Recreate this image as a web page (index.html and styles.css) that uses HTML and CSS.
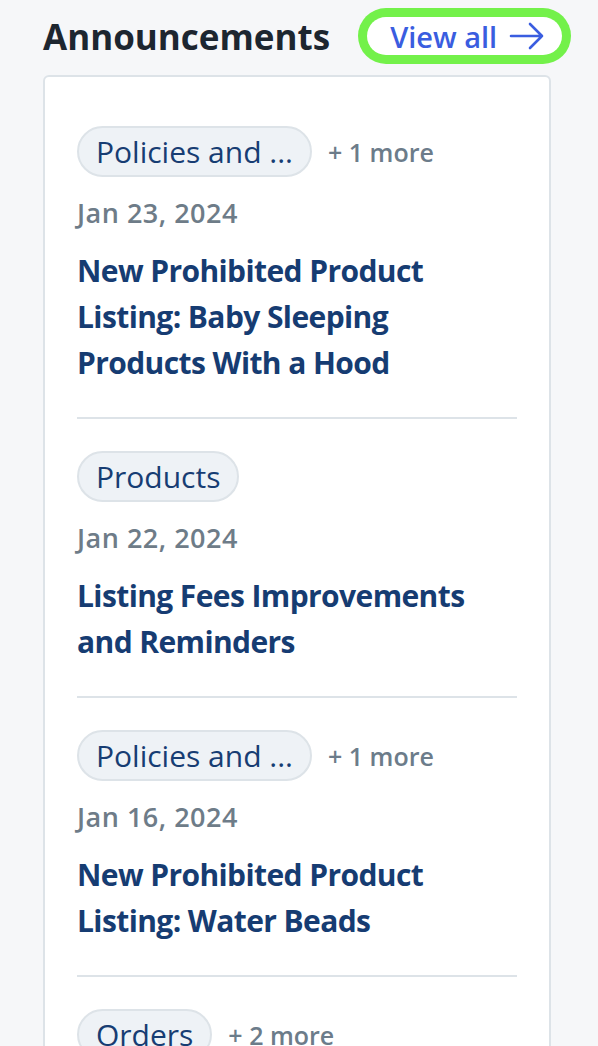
FILE: index.html
```html
<!DOCTYPE html>
<html>
<head>
<meta charset="utf-8">
<link rel="stylesheet" href="styles.css">
</head>
<body>
<div class="panel">
  <div class="header">
    <h2 class="title">Announcements</h2>
    <a class="view-all" href="#">View all
      <svg class="arrow" width="36" height="28" viewBox="0 0 36 28" fill="none" stroke="currentColor" stroke-width="2.6" stroke-linecap="round" stroke-linejoin="round"><path d="M2 14H33M21 2L33 14L21 26"/></svg>
    </a>
  </div>
  <div class="card">
    <div class="item">
      <div class="tags"><span class="tag">Policies and ...</span><span class="more">+ 1 more</span></div>
      <div class="date">Jan 23, 2024</div>
      <a class="headline" href="#">New Prohibited Product Listing: Baby Sleeping Products With a Hood</a>
    </div>
    <div class="item">
      <div class="tags"><span class="tag">Products</span></div>
      <div class="date">Jan 22, 2024</div>
      <a class="headline" href="#">Listing Fees Improvements and Reminders</a>
    </div>
    <div class="item">
      <div class="tags"><span class="tag">Policies and ...</span><span class="more">+ 1 more</span></div>
      <div class="date">Jan 16, 2024</div>
      <a class="headline" href="#">New Prohibited Product Listing: Water Beads</a>
    </div>
    <div class="item last">
      <div class="tags"><span class="tag">Orders</span><span class="more">+ 2 more</span></div>
    </div>
  </div>
</div>
</body>
</html>
```
FILE: styles.css
```css
html, body {
  margin: 0;
  padding: 0;
  background: #f6f7f9;
  font-family: "Open Sans", Lato, Arial, sans-serif;
}
.panel {
  width: 508px;
  margin-left: 43px;
  padding-top: 13px;
}
.header {
  display: flex;
  align-items: center;
  gap: 37px;
  height: 46px;
}
.title {
  margin: 0;
  flex-shrink: 0;
  font-size: 35px;
  font-weight: 700;
  color: #1d2630;
  white-space: nowrap;
}
.view-all {
  display: flex;
  flex-shrink: 0;
  align-items: center;
  gap: 12px;
  height: 38px;
  padding: 0 17px 0 23px;
  background: #fff;
  border-radius: 19px;
  box-shadow: 0 0 0 9px #73f14a;
  color: #3a5de0;
  font-size: 29px;
  font-weight: 600;
  white-space: nowrap;
  text-decoration: none;
}
.arrow { display: block; }
.card {
  margin-top: 16px;
  background: #fff;
  border: 2px solid #dde3e8;
  border-radius: 6px;
  padding: 17px 32px 0 32px;
}
.item {
  padding: 32px 0 31px;
  border-bottom: 2px solid #dde3e8;
}
.item.last {
  border-bottom: none;
}
.tags {
  display: flex;
  align-items: center;
  gap: 16px;
}
.tag {
  display: inline-flex;
  align-items: center;
  height: 47px;
  padding: 0 17px;
  border: 2px solid #dde3e8;
  border-radius: 26px;
  background: #eef2f6;
  color: #173d73;
  font-size: 30px;
  font-weight: 400;
}
.more {
  color: #6c7c8a;
  font-size: 25px;
  font-weight: 600;
}
.date {
  margin-top: 18px;
  line-height: 36px;
  color: #6e7c88;
  font-size: 27px;
  font-weight: 600;
  letter-spacing: 0.5px;
}
.headline {
  display: block;
  margin-top: 17px;
  color: #163c72;
  font-size: 30px;
  line-height: 46px;
  font-weight: 700;
  letter-spacing: -0.6px;
  text-decoration: none;
}
```
